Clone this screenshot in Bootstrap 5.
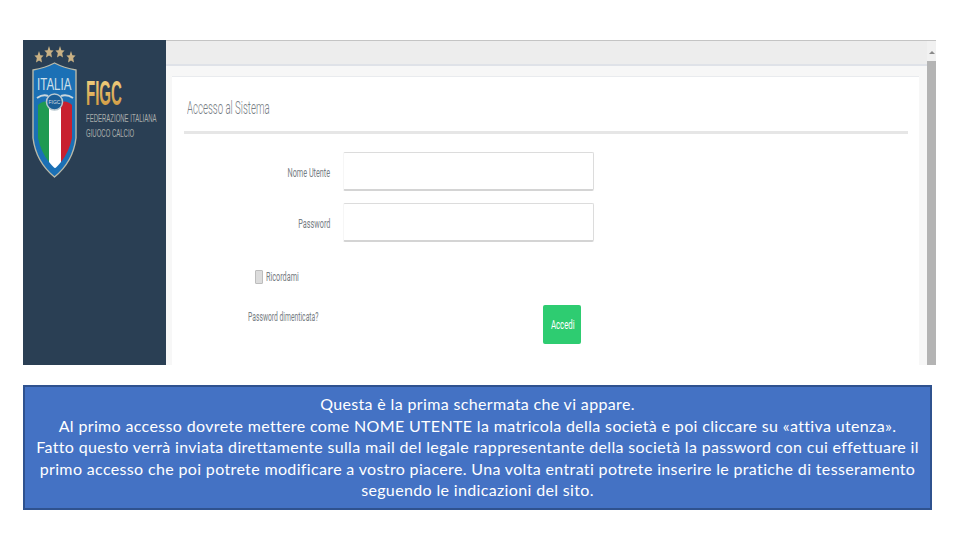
<!DOCTYPE html>
<html lang="it">
<head>
    <meta charset="UTF-8">
    <meta name="viewport" content="width=device-width, initial-scale=1.0">
    <title>Accesso al Sistema</title>
    <link href="https://cdn.jsdelivr.net/npm/bootstrap@5.3.2/dist/css/bootstrap.min.css" rel="stylesheet">
    <style>
        body {
            background: #fff;
            font-family: "Roboto", "Liberation Sans", sans-serif;
            overflow: hidden;
        }

        .slide {
            width: 960px;
            height: 540px;
            padding: 40px 23px 0;
        }

        .shot {
            width: 913px;
            height: 325px;
        }

        .side-bar {
            width: 143px;
            background: #2a3f54;
        }

        .side-bar svg {
            display: block;
        }

        .top-strip {
            height: 26px;
            background: #ededed;
            border-top: 1px solid #c4c4c4;
            border-bottom: 2px solid #dfe2e8;
        }

        .main-area {
            background: #f7f7f7;
            padding: 10px 8px 0 6px;
        }

        .login-panel {
            background: #fff;
            border-top: 1px solid #e9ebee;
            padding: 0 11px 0 12px;
        }

        .panel-title {
            height: 57px;
            border-bottom: 3px solid #e6e6e6;
            padding-left: 3px;
            padding-top: 20px;
        }

        .login-form {
            padding-top: 18px;
        }

        .squeezed {
            display: inline-block;
            transform-origin: left center;
            white-space: nowrap;
            font-weight: 300;
            color: #777e84;
        }

        .panel-title .squeezed {
            font-size: 18px;
            line-height: 20px;
            transform: scaleX(.535);
        }

        .field-row {
            height: 39px;
            margin-bottom: 12px;
        }

        .field-label {
            width: 159px;
            padding-right: 13px;
            text-align: right;
            flex: none;
        }

        .field-label .squeezed {
            font-size: 13px;
            font-weight: 400;
            transform: scaleX(.56);
            transform-origin: right center;
        }

        .login-input.form-control {
            width: 251px;
            height: 39px;
            flex: none;
            border-radius: 2px;
            border: 1px solid #dcdcdc;
            border-left-color: #f6f6f6;
            border-bottom: 2px solid #d4d4d4;
        }

        .remember-row {
            padding: 0 0 5px 71px;
            height: 51px;
        }

        .fake-check {
            width: 8px;
            height: 14px;
            background: #dcdcdc;
            border: 1px solid #bdbdbd;
            border-radius: 1px;
            margin-right: 3px;
            flex: none;
        }

        .remember-row .squeezed {
            font-size: 13px;
            font-weight: 400;
            transform: scaleX(.56);
        }

        .forgot-link .squeezed {
            font-size: 13px;
            font-weight: 400;
            transform: scaleX(.52);
        }

        .action-row {
            padding-left: 64px;
        }

        .forgot-link {
            width: 295px;
            padding-top: 3px;
            flex: none;
            line-height: 16px;
        }

        .btn-login.btn {
            width: 38px;
            height: 39px;
            background: #2ecc71;
            border: 0;
            border-radius: 2px;
            padding: 0;
            color: #fff;
            font-size: 13px;
            line-height: 39px;
            flex: none;
        }

        .btn-login .squeezed {
            color: #fff;
            font-weight: 400;
            transform: scaleX(.6);
            transform-origin: center;
        }

        .scroll-track {
            width: 9px;
            background: #f1f1f1;
            border-top: 1px solid #c4c4c4;
            flex: none;
        }

        .scroll-arrow {
            height: 20px;
            padding-top: 10px;
        }

        .scroll-arrow span {
            display: block;
            width: 0;
            margin: 0 auto;
            border: 3px solid transparent;
            border-top: 0;
            border-bottom: 3px solid #8a8a8a;
        }

        .scroll-thumb {
            background: #b4b4b4;
        }

        .info-box {
            width: 909px;
            height: 125px;
            margin-top: 20px;
            background: #4472c4;
            border: 2px solid #2f528f;
            color: #fff;
            font-family: "Lato", "Liberation Sans", sans-serif;
            font-size: 16px;
            letter-spacing: .35px;
            line-height: 21.5px;
            text-align: center;
            padding: 6px 8px 0;
        }
    </style>
</head>
<body>
    <div class="slide">
        <div class="shot d-flex overflow-hidden">
            <!-- barra laterale col logo -->
            <div class="side-bar flex-shrink-0">
                <svg width="143" height="150" viewBox="0 0 143 150">
                    <defs>
                        <linearGradient id="gold" x1="0" y1="0" x2="0" y2="1">
                            <stop offset="0" stop-color="#f6d98a"/>
                            <stop offset="1" stop-color="#c98f35"/>
                        </linearGradient>
                        <polygon id="star" points="0,-6 1.4,-1.8 4.6,-1.6 2.2,1 3,5.5 0,3.4 -3,5.5 -2.2,1 -4.6,-1.6 -1.4,-1.8"/>
                    </defs>
                    <g fill="#c9b184">
                        <use href="#star" x="16" y="17"/>
                        <use href="#star" x="26" y="12"/>
                        <use href="#star" x="37" y="12"/>
                        <use href="#star" x="48" y="17"/>
                    </g>
                    <!-- scudo -->
                    <path d="M10 30 Q22 28 31.5 23 Q41 28 53 30 L53 98 Q50 122 31.5 137 Q13 122 10 98 Z" fill="#1b70b5" stroke="#b9b9a8" stroke-width="1.4"/>
                    <path d="M15 65 Q20 60 26 62 L26 122 Q18 112 15 98 Z" fill="#1f9a52"/>
                    <path d="M26 62 L38 62 L38 122 Q33 128 32 128 Q31 128 26 122 Z" fill="#fff"/>
                    <path d="M38 62 Q44 60 49 65 L49 98 Q46 112 38 122 Z" fill="#c8202f"/>
                    <path d="M14 58 Q20 54 25 56 M38 56 Q44 54 50 58" stroke="#c9d6dc" stroke-width="2" fill="none"/>
                    <circle cx="31.5" cy="62" r="8" fill="#1b5e96" stroke="#b8c8d0" stroke-width="1.5"/>
                    <text x="31.5" y="64" fill="#d5dde2" font-family="Liberation Sans" font-size="5" text-anchor="middle">FIGC</text>
                    <text transform="translate(14,50) scale(.72,1)" fill="#cfe0ea" font-family="Liberation Sans" font-size="16">ITALIA</text>
                    <!-- scritta -->
                    <text transform="translate(63,65) scale(.43,1)" fill="url(#gold)" font-family="Liberation Sans" font-weight="700" font-size="35">FIGC</text>
                    <text transform="translate(63,82) scale(.6,1)" fill="#a9adab" font-family="Liberation Sans" font-size="10">FEDERAZIONE ITALIANA</text>
                    <text transform="translate(63,97) scale(.6,1)" fill="#a9adab" font-family="Liberation Sans" font-size="10">GIUOCO CALCIO</text>
                </svg>
            </div>

            <div class="flex-grow-1 d-flex flex-column">
                <div class="top-strip flex-shrink-0"></div>
                <div class="main-area flex-grow-1 d-flex flex-column">
                    <div class="login-panel flex-grow-1">
                        <div class="panel-title"><span class="squeezed">Accesso al Sistema</span></div>
                        <form class="login-form">
                            <div class="field-row d-flex align-items-center">
                                <label class="field-label"><span class="squeezed">Nome Utente</span></label>
                                <input type="text" class="form-control login-input">
                            </div>
                            <div class="field-row d-flex align-items-center">
                                <label class="field-label"><span class="squeezed">Password</span></label>
                                <input type="password" class="form-control login-input">
                            </div>
                            <div class="remember-row d-flex align-items-center">
                                <span class="fake-check"></span><span class="squeezed">Ricordami</span>
                            </div>
                            <div class="action-row d-flex align-items-start">
                                <a class="forgot-link text-decoration-none"><span class="squeezed">Password dimenticata?</span></a>
                                <button type="button" class="btn btn-login"><span class="squeezed">Accedi</span></button>
                            </div>
                        </form>
                    </div>
                </div>
            </div>

            <div class="scroll-track">
                <div class="scroll-arrow"><span></span></div>
                <div class="scroll-thumb h-100"></div>
            </div>
        </div>

        <div class="info-box">
            Questa è la prima schermata che vi appare.<br>
            Al primo accesso dovrete mettere come NOME UTENTE la matricola della società e poi cliccare su «attiva utenza».<br>
            Fatto questo verrà inviata direttamente sulla mail del legale rappresentante della società la password con cui effettuare il primo accesso che poi potrete modificare a vostro piacere. Una volta entrati potrete inserire le pratiche di tesseramento seguendo le indicazioni del sito.
        </div>
    </div>

    <script src="https://cdn.jsdelivr.net/npm/bootstrap@5.3.2/dist/js/bootstrap.bundle.min.js"></script>
</body>
</html>
